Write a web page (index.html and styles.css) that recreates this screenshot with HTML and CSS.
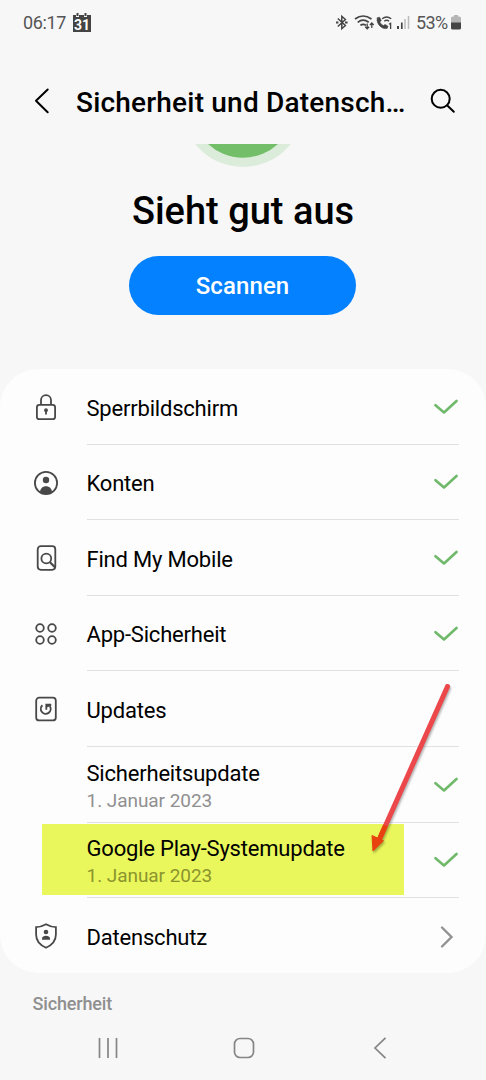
FILE: index.html
```html
<!DOCTYPE html>
<html lang="de">
<head>
<meta charset="utf-8">
<title>Sicherheit und Datenschutz</title>
<link rel="stylesheet" href="styles.css">
</head>
<body>
<div class="phone">
  <header class="status">
    <span class="clock">06:17</span>
    <svg class="calendar" width="20" height="20" viewBox="0 0 20 20">
      <path d="M1 2h3v2h3V2h5v2h3V2h4v17H1z" fill="#444"/>
      <path d="M5.500 0v3M13.500 0v3" stroke="#444" stroke-width="2"/>
      <text x="10" y="16.800" class="calendar-day">31</text>
    </svg>
    <svg class="status-icons" width="76" height="20" viewBox="334 12 76 20" fill="none" stroke="#444" stroke-width="1.500">
      <path d="M337.800 18.500l7.600 7-3.600 3.200V16.300l3.600 3.200-7.600 7"/>
      <path d="M336 22.500h2.400M345 22.500h2.600" stroke-width="2"/>
      <path d="M355 19q8-6 16.500 0M357.700 22.300q5.400-4.200 11 0M360.400 25.400q2.800-2.200 5.600 0" stroke-width="1.700"/>
      <path d="M367.200 23.500v5.300m-2-2l2 2 2-2M371.800 28v-5m-1.900 2l1.900-2 1.900 2" stroke-width="1.300"/>
      <path d="M377.200 17.700l2.400-.5 1.700 3.300-1.500 1.500c1 2 2.200 2.900 3.800 3.600l1.400-1.200 3 1.800-.7 2c-4 2-11.500-3.500-10.100-10.500z" fill="#444" stroke-width=".6"/>
      <path d="M382.200 18.700q4.300-3.400 9 0M384.300 21.200q2.300-1.800 4.800 0" stroke-width="1.400"/>
      <path d="M388.900 24.300l1.700-1v5.700" stroke-width="1.300"/>
      <path d="M398 26v3" stroke-width="2"/>
      <path d="M401.800 22.500V29" stroke-width="1.700"/>
      <path d="M405 19v10M408.500 16v13" stroke="#bbb" stroke-width="1.500"/>
    </svg>
    <span class="percent">53%</span>
    <svg class="battery" width="10" height="15" viewBox="0 0 10 15">
      <path d="M3 0h4v1.500h1.500q1.500 0 1.500 1.500v5H0V3q0-1.500 1.500-1.500H3z" fill="#b5b5b5"/>
      <path d="M0 7.500h10V13q0 1.500-1.500 1.500h-7Q0 14.500 0 13z" fill="#444"/>
    </svg>
  </header>

  <div class="appbar">
    <svg class="back" width="16" height="26" viewBox="0 0 16 26" fill="none" stroke="#000" stroke-width="2" stroke-linecap="round" stroke-linejoin="round"><path d="M13.700 1.500L2 12.800 13.700 24.200"/></svg>
    <h1>Sicherheit und Datensch…</h1>
    <svg class="search" width="26" height="26" viewBox="0 0 26 26" fill="none" stroke="#000" stroke-width="2" stroke-linecap="round"><circle cx="10.700" cy="10.800" r="9"/><path d="M17.300 17.500l6.500 6.300"/></svg>
  </div>

  <section class="hero">
    <svg class="state" width="120" height="24" viewBox="0 0 120 24"><circle cx="60" cy="-38" r="61" fill="#dcecda"/><circle cx="60" cy="-38" r="51.700" fill="#73be69"/></svg>
    <h2>Sieht gut aus</h2>
    <button class="scan">Scannen</button>
  </section>

  <main class="card">
    <div class="row">
      <svg class="icon" viewBox="0 0 28 28"><rect x="4.900" y="11.800" width="18.200" height="14.400" rx="2.500"/><path d="M9 11.500V7.200a5 5 0 0 1 10 0v4.300"/><circle class="solid" cx="14" cy="17.200" r="1.900"/><path d="M14 18v3.600"/></svg>
      <div class="body"><span>Sperrbildschirm</span><svg class="check" viewBox="0 0 24 16"><path d="M1.500 6.200l8.500 7.300L22.500 2"/></svg></div>
    </div>
    <div class="row">
      <svg class="icon" viewBox="0 0 28 28"><circle cx="14" cy="14" r="11.100"/><circle class="solid" cx="14" cy="11" r="3.200"/><path class="solid" d="M8 23.500c0-8.200 12-8.200 12 0q-6 3.200-12 0z"/></svg>
      <div class="body"><span>Konten</span><svg class="check" viewBox="0 0 24 16"><path d="M1.500 6.200l8.500 7.300L22.500 2"/></svg></div>
    </div>
    <div class="row">
      <svg class="icon" viewBox="0 0 28 28"><rect x="5.700" y="2.200" width="17.600" height="23.600" rx="3.200"/><circle cx="14.300" cy="14.500" r="4.900"/><path d="M18 18.200l5 5" stroke-width="2.200"/></svg>
      <div class="body"><span>Find My Mobile</span><svg class="check" viewBox="0 0 24 16"><path d="M1.500 6.200l8.500 7.300L22.500 2"/></svg></div>
    </div>
    <div class="row">
      <svg class="icon" viewBox="0 0 28 28"><circle cx="8" cy="8" r="3.800"/><circle cx="20" cy="8" r="3.800"/><circle cx="8" cy="20" r="3.800"/><circle cx="20" cy="20" r="3.800"/></svg>
      <div class="body"><span>App-Sicherheit</span><svg class="check" viewBox="0 0 24 16"><path d="M1.500 6.200l8.500 7.300L22.500 2"/></svg></div>
    </div>
    <div class="row">
      <svg class="icon" viewBox="0 0 28 28"><rect x="4.200" y="2.700" width="19.600" height="22.700" rx="3"/><path d="M10.400 10.300a4.900 4.900 0 1 0 7.500 1" stroke-width="1.900"/><path d="M14.300 14.800V9.600h4.700" stroke-width="1.800"/><path class="solid" d="M14.400 9h4.800v2l-4.800 1.500z"/></svg>
      <div class="body"><span>Updates</span></div>
    </div>
    <div class="row">
      <span class="icon"></span>
      <div class="body"><div class="labels"><span>Sicherheitsupdate</span><small>1. Januar 2023</small></div><svg class="check" viewBox="0 0 24 16"><path d="M1.500 6.200l8.500 7.300L22.500 2"/></svg></div>
    </div>
    <div class="row marked">
      <span class="icon"></span>
      <div class="body"><div class="labels"><span>Google Play-Systemupdate</span><small>1. Januar 2023</small></div><svg class="check" viewBox="0 0 24 16"><path d="M1.500 6.200l8.500 7.300L22.500 2"/></svg></div>
    </div>
    <div class="row">
      <svg class="icon" viewBox="0 0 28 28"><path d="M14 2.200c3.500 2 6.500 2.800 9.900 3v7.300c0 6-3.300 10.300-9.900 13.200-6.600-2.900-9.900-7.200-9.900-13.200V5.200c3.400-.2 6.400-1 9.900-3z"/><circle class="solid" cx="14" cy="10" r="2.300"/><path class="solid" d="M10 17.800v-1.300c0-3.800 8-3.800 8 0v1.300z"/></svg>
      <div class="body"><span>Datenschutz</span><svg class="chevron" viewBox="0 0 14 24"><path d="M2 2.500l9.500 9.500L2 21.500"/></svg></div>
    </div>
    <svg class="arrow" width="110" height="190" viewBox="350 675 110 190"><path d="M447.500 686.500L380 838" stroke="#ec474a" stroke-width="5" stroke-linecap="round"/><path d="M385.500 825.500L379.500 839" stroke="#e8420f" stroke-width="5"/><path d="M373 851l-1-15.500 11.500 5.300z" fill="#e8420f" stroke="#e8420f"/></svg>
  </main>

  <h3>Sicherheit</h3>
  <nav class="navbar">
    <svg width="24" height="24" viewBox="0 0 24 24"><path d="M3.500 2v20M12 2v20M20.500 2v20"/></svg>
    <svg width="24" height="24" viewBox="0 0 24 24"><rect x="2.500" y="2.500" width="19" height="19" rx="5.500"/></svg>
    <svg width="24" height="24" viewBox="0 0 24 24"><path d="M17.500 1.800L7 12l10.500 10.200"/></svg>
  </nav>
</div>
</body>
</html>
```

FILE: styles.css
```css
* { box-sizing: border-box; }
body { margin: 0; background: #f7f7f7; font-family: Roboto, sans-serif; color: #000; }
h1, h2, h3 { margin: 0; font-weight: 500; white-space: nowrap; }
svg { display: block; flex: none; }
.phone { width: 486px; height: 1080px; overflow: hidden; display: flex; flex-direction: column; }

.status { height: 46px; padding: 0 25.500px 0 23px; display: flex; align-items: center; font-size: 18px; color: #555; }
.clock { width: 48.500px; margin-top: -1px; letter-spacing: -0.350px; }
.calendar { margin-top: -1px; }
.calendar-day { font: 700 14px Roboto, sans-serif; fill: #fff; text-anchor: middle; }
.status-icons { margin-left: auto; margin-top: -2px; }
.percent { margin-left: 6px; margin-top: -1px; width: 34.500px; letter-spacing: -0.600px; }
.battery { margin-top: -1px; }

.appbar { height: 98px; padding: 14px 30px 0 34px; display: flex; align-items: flex-start; }
.back { margin-top: 28px; }
.appbar h1 { margin-left: 26px; margin-top: 26px; font-size: 28px; line-height: 34px; letter-spacing: 0.200px; }
.search { margin-left: auto; margin-top: 28px; }

.hero { height: 225px; display: flex; flex-direction: column; align-items: center; }
.hero h2 { margin-top: 20px; font-size: 38px; line-height: 46px; }
.scan { margin-top: 22px; margin-right: 1px; width: 227px; height: 59px; border: 0; border-radius: 30px; background: #0381fe; color: #fff; font: 500 24px Roboto, sans-serif; padding: 1px 0 0; letter-spacing: 0.100px; }

.card { position: relative; height: 604px; background: #fdfdfd; border-radius: 38px; display: grid; grid-template-rows: repeat(8, 75.600px); flex: none; }
.row { display: flex; align-items: stretch; padding: 0 27px 0 32px; }
.icon { width: 28px; flex: none; margin-right: 26.500px; margin-top: 0.500px; align-self: center; height: 28px; fill: none; stroke: #484848; stroke-width: 1.800; }
.icon .solid { fill: #484848; stroke: none; }
.body { flex: 1; display: flex; align-items: center; justify-content: space-between; padding-top: 3.500px; border-bottom: 1.500px solid #e1e1e1; font-size: 22px; letter-spacing: -0.200px; white-space: nowrap; }
.row:nth-child(8) .body { border-bottom: 0; }
.labels { display: flex; flex-direction: column; line-height: 28px; padding-top: 1px; }
.labels small { font-size: 19px; line-height: 26px; letter-spacing: -0.050px; color: #909090; }
.check { width: 24px; height: 16px; margin: -2.500px 1.500px 0 0; fill: none; stroke: #70b96b; stroke-width: 2.600; stroke-linecap: round; stroke-linejoin: round; }
.chevron { width: 14px; height: 24px; margin: -2px 5px 0 0; fill: none; stroke: #929292; stroke-width: 2.400; stroke-linecap: round; }
.marked { background: linear-gradient(#e9f75c, #e9f75c) 42px 1.500px / 362px 71px no-repeat; }
.marked small { color: #8b942d; }
.arrow { position: absolute; left: 350px; top: 306px; filter: drop-shadow(1px 2px 1px rgba(0, 0, 0, .3)); }

h3 { margin: 20px 0 0 32.500px; font-size: 18px; line-height: 22px; letter-spacing: -0.150px; color: #8f8f8f; }
.navbar { margin-top: 21px; padding: 0 94px 0 95.500px; display: flex; justify-content: space-between; fill: none; stroke: #858585; stroke-width: 1.700; }
```
